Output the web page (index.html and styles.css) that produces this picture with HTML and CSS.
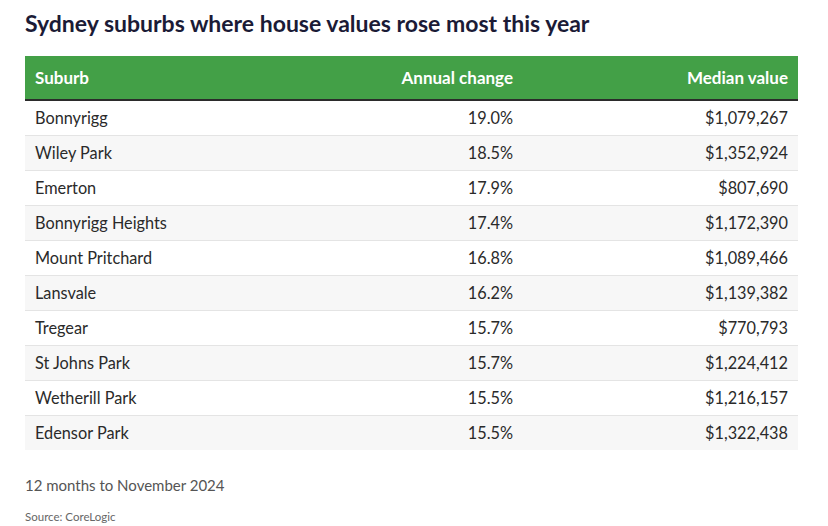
FILE: index.html
```html
<!DOCTYPE html>
<html lang="en">
<head>
<meta charset="utf-8">
<title>Sydney suburbs</title>
<link rel="stylesheet" href="styles.css">
</head>
<body>
<div class="chart">
  <h1 class="title">Sydney suburbs where house values rose most this year</h1>
  <table class="data">
    <thead>
      <tr><th class="c1">Suburb</th><th class="c2 num">Annual change</th><th class="c3 num">Median value</th></tr>
    </thead>
    <tbody>
      <tr><td>Bonnyrigg</td><td class="num">19.0%</td><td class="num">$1,079,267</td></tr>
      <tr><td>Wiley Park</td><td class="num">18.5%</td><td class="num">$1,352,924</td></tr>
      <tr><td>Emerton</td><td class="num">17.9%</td><td class="num">$807,690</td></tr>
      <tr><td>Bonnyrigg Heights</td><td class="num">17.4%</td><td class="num">$1,172,390</td></tr>
      <tr><td>Mount Pritchard</td><td class="num">16.8%</td><td class="num">$1,089,466</td></tr>
      <tr><td>Lansvale</td><td class="num">16.2%</td><td class="num">$1,139,382</td></tr>
      <tr><td>Tregear</td><td class="num">15.7%</td><td class="num">$770,793</td></tr>
      <tr><td>St Johns Park</td><td class="num">15.7%</td><td class="num">$1,224,412</td></tr>
      <tr><td>Wetherill Park</td><td class="num">15.5%</td><td class="num">$1,216,157</td></tr>
      <tr><td>Edensor Park</td><td class="num">15.5%</td><td class="num">$1,322,438</td></tr>
    </tbody>
  </table>
  <p class="note">12 months to November 2024</p>
  <p class="source">Source: CoreLogic</p>
</div>
</body>
</html>
```
FILE: styles.css
```css
html, body { margin: 0; padding: 0; background: #fff; }
body { font-family: "Lato", "Noto Sans", sans-serif; }
.chart { padding: 8px 30px 0 25px; }
.title {
  margin: 0 0 18px 0;
  font-size: 23px;
  line-height: 30px;
  font-weight: 700;
  color: #1b1b36;
}
.data {
  width: 773px;
  border-collapse: collapse;
  font-size: 16.3px;
  color: #2a2a2a;
}
.data th {
  background: #43a047;
  color: #fff;
  font-size: 17px;
  font-weight: 700;
  height: 44px;
  padding: 0 10px;
  text-align: left;
  border-bottom: 2px solid #2b2b2b;
  box-sizing: border-box;
}
.data th.num, .data td.num { text-align: right; }
.data .c2 { width: 200px; }
.data .c3 { width: 275px; }
.data td {
  height: 35px;
  padding: 0 10px;
  box-sizing: border-box;
  border-bottom: 1px solid #e4e4e4;
}
.data tbody tr:nth-child(even) td { background: #f7f7f7; }
.data tbody tr:last-child td { border-bottom: none; }
.note {
  margin: 25px 0 0 0;
  font-size: 15px;
  line-height: 20px;
  color: #555;
}
.source {
  margin: 14px 0 0 0;
  font-size: 11.5px;
  line-height: 16px;
  color: #666;
}
```
